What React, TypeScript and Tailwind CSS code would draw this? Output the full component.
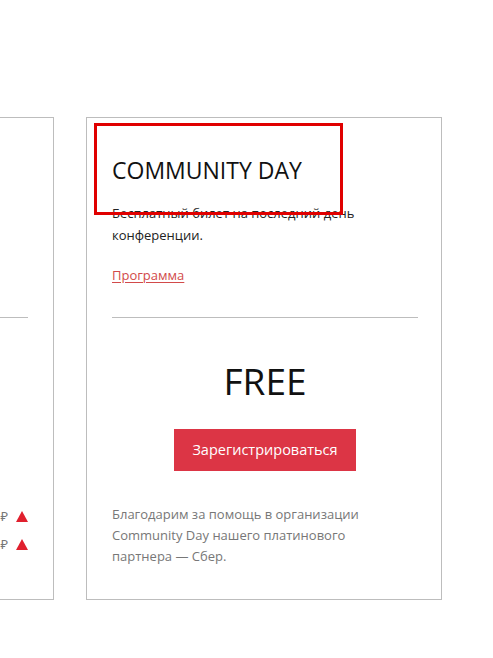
import React from "react";

function Triangle() {
  return (
    <svg width="12" height="11" viewBox="0 0 12 11" className="shrink-0">
      <polygon points="6,0 12,11 0,11" fill="#e0202e" />
    </svg>
  );
}

export default function App() {
  return (
    <div
      className="w-[493px] h-[658px] bg-white overflow-hidden"
      style={{ fontFamily: '"Open Sans", "Noto Sans", sans-serif' }}
    >
      <div className="flex gap-[32px] ml-[-302px] mt-[117px]">
        {/* left card (mostly offscreen) */}
        <div className="w-[356px] h-[483px] shrink-0 border border-[#bdbdbd] px-[25px] flex flex-col">
          <div className="mt-[199px] h-px bg-[#bdbdbd]" />
          <div className="mt-[188px] flex flex-col gap-[8px] text-[13px] leading-[20px] text-[#777]">
            <div className="flex items-center justify-end gap-[8px]">
              <span>Стандартный билет — 12 000 ₽</span>
              <Triangle />
            </div>
            <div className="flex items-center justify-end gap-[8px]">
              <span>Онлайн билет — 6 000 ₽</span>
              <Triangle />
            </div>
          </div>
        </div>

        {/* right card */}
        <div className="relative w-[356px] h-[483px] shrink-0 border border-[#bdbdbd] pl-[25px] pr-[23px] pt-[37px] flex flex-col">
          <div className="text-[23px] leading-[30px] text-[#111]">COMMUNITY DAY</div>
          <div className="mt-[17px] text-[13px] leading-[22px] text-[#222]">
            Бесплатный билет на последний день
            <br />
            конференции.
          </div>
          <div className="mt-[18px] text-[13px] leading-[22px]">
            <a className="text-[#d24a4a] underline underline-offset-2">Программа</a>
          </div>
          <div className="mt-[31px] h-px bg-[#bdbdbd]" />
          <div className="mt-[40px] text-center text-[37px] leading-[46px] text-[#111]">FREE</div>
          <div className="mt-[25px] flex justify-center">
            <div className="w-[182px] h-[42px] bg-[#dc3545] text-white text-[14.5px] flex items-center justify-center">
              Зарегистрироваться
            </div>
          </div>
          <div className="mt-[33px] text-[13px] leading-[21px] text-[#777]">
            Благодарим за помощь в организации
            <br />
            Community Day нашего платинового
            <br />
            партнера — Сбер.
          </div>
          <div className="absolute left-[7px] top-[5px] w-[249px] h-[92px] border-[3px] border-[#e00000]" />
        </div>
      </div>
    </div>
  );
}
